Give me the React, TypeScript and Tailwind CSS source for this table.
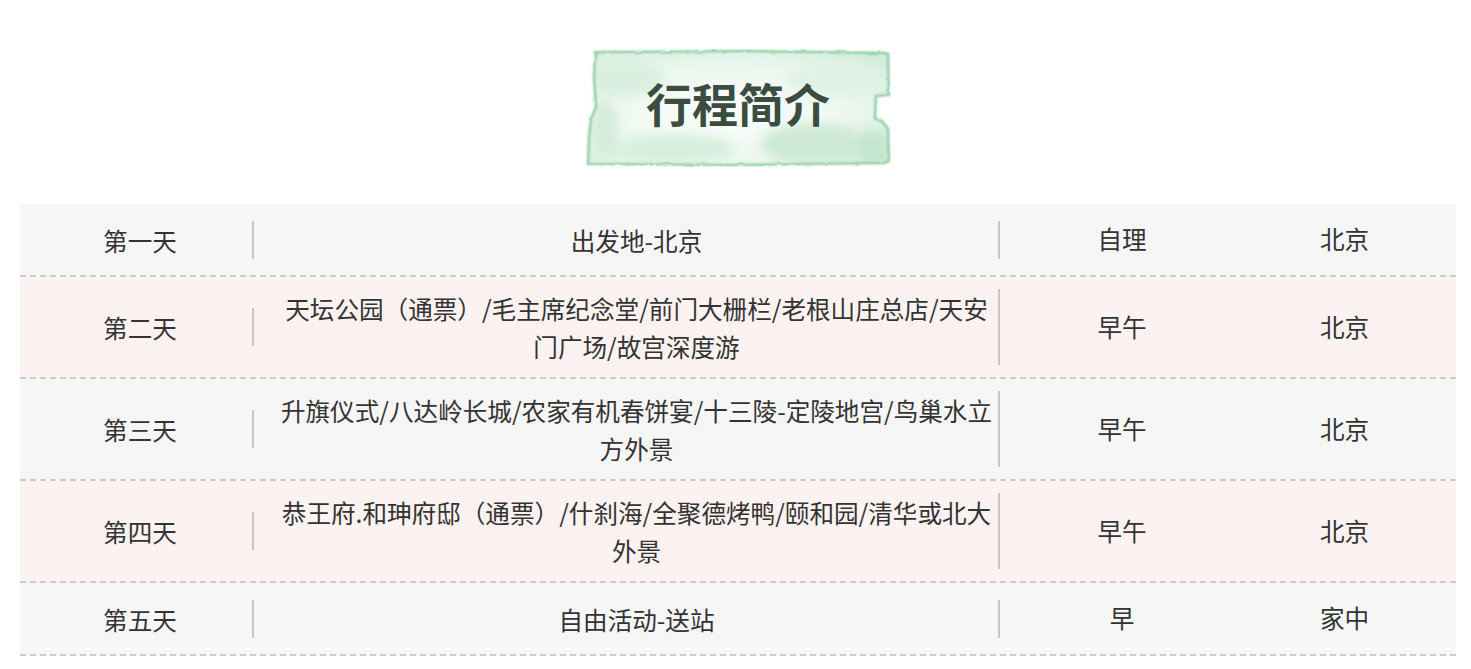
import React from 'react';

type Day = {
  day: string;
  route: string[];
  meals: string;
  stay: string;
};

const days: Day[] = [
  { day: '第一天', route: ['出发地-北京'], meals: '自理', stay: '北京' },
  {
    day: '第二天',
    route: ['天坛公园（通票）/毛主席纪念堂/前门大栅栏/老根山庄总店/天安', '门广场/故宫深度游'],
    meals: '早午',
    stay: '北京',
  },
  {
    day: '第三天',
    route: ['升旗仪式/八达岭长城/农家有机春饼宴/十三陵-定陵地宫/鸟巢水立', '方外景'],
    meals: '早午',
    stay: '北京',
  },
  {
    day: '第四天',
    route: ['恭王府.和珅府邸（通票）/什刹海/全聚德烤鸭/颐和园/清华或北大', '外景'],
    meals: '早午',
    stay: '北京',
  },
  { day: '第五天', route: ['自由活动-送站'], meals: '早', stay: '家中' },
];

function WatercolorBadge() {
  // torn watercolor paper behind the title
  const shape =
    'M10,3 L160,2 L303,4 L304,46 L291,47 L290,70 L296,71 L303,80 L304,114 L150,116 L3,115 L4,88 L6,70 L11,58 L9,30 Z';
  return (
    <svg className="absolute inset-0" width="306" height="118" viewBox="0 0 306 118">
      <defs>
        <filter id="rough" x="-5%" y="-5%" width="110%" height="110%">
          <feTurbulence type="fractalNoise" baseFrequency="0.08" numOctaves="3" seed="4" />
          <feDisplacementMap in="SourceGraphic" scale="3" />
        </filter>
        <filter id="soft">
          <feGaussianBlur stdDeviation="6" />
        </filter>
        <filter id="edge">
          <feGaussianBlur stdDeviation="1.2" />
        </filter>
        <radialGradient id="paper" cx="0.45" cy="0.55" r="0.7">
          <stop offset="0" stopColor="#fbfdfb" />
          <stop offset="0.55" stopColor="#eef8f1" />
          <stop offset="1" stopColor="#d2eddb" />
        </radialGradient>
        <clipPath id="clip">
          <path d={shape} />
        </clipPath>
      </defs>
      <g filter="url(#rough)">
        <path d={shape} fill="url(#paper)" />
        <g clipPath="url(#clip)" filter="url(#soft)">
          <ellipse cx="40" cy="30" rx="40" ry="18" fill="#d9efe0" />
          <ellipse cx="250" cy="30" rx="50" ry="16" fill="#e0f2e6" />
          <ellipse cx="230" cy="95" rx="55" ry="20" fill="#cde9d6" />
          <ellipse cx="90" cy="100" rx="60" ry="14" fill="#d6eedd" />
          <ellipse cx="290" cy="100" rx="16" ry="20" fill="#c4e5cf" />
          <ellipse cx="20" cy="80" rx="14" ry="30" fill="#d4ecdb" />
        </g>
        <path d={shape} fill="none" stroke="#86cb9c" strokeWidth="2.2" filter="url(#edge)" />
        <path d={shape} fill="none" stroke="#9ad6ad" strokeWidth="0.8" />
      </g>
    </svg>
  );
}

export default function App() {
  return (
    <div
      className="min-h-[669px] bg-white pl-5 pr-[15px]"
      style={{ fontFamily: '"Noto Sans CJK SC", "Noto Sans", sans-serif' }}
    >
      {/* Title */}
      <div className="flex justify-center pt-[49px]">
        <div className="relative flex h-[118px] w-[306px] items-center justify-center">
          <WatercolorBadge />
          <h2 className="relative pb-[12px] text-[46px] leading-none font-bold text-[#3b4d40]">行程简介</h2>
        </div>
      </div>

      {/* Itinerary table */}
      <div className="mt-[37px] w-[1436px] text-[24.6px] leading-[38px] text-[#333]">
        {days.map((d, i) => (
          <div
            key={d.day}
            className={`grid min-h-[73px] grid-cols-[234px_757px_222px_223px] border-b-2 border-dashed border-[#cbcbcb] py-3 ${
              i % 2 === 1 ? 'bg-[#fcf2f1]' : 'bg-[#f6f6f6]'
            }`}
          >
            <div className="flex items-center">
              <div className="w-full border-r-2 border-[#c6c6c6] pl-2 text-center">{d.day}</div>
            </div>
            <div className="flex items-center pr-[11px]">
              <div className="w-full border-r-2 border-[#c6c6c6] pl-[21px] text-center whitespace-nowrap">
                {d.route.map((line, j) => (
                  <React.Fragment key={j}>
                    {j > 0 && <br />}
                    {line}
                  </React.Fragment>
                ))}
              </div>
            </div>
            <div className="flex items-center justify-center pb-[3px]">{d.meals}</div>
            <div className="flex items-center justify-center pb-[3px]">{d.stay}</div>
          </div>
        ))}
      </div>
    </div>
  );
}
